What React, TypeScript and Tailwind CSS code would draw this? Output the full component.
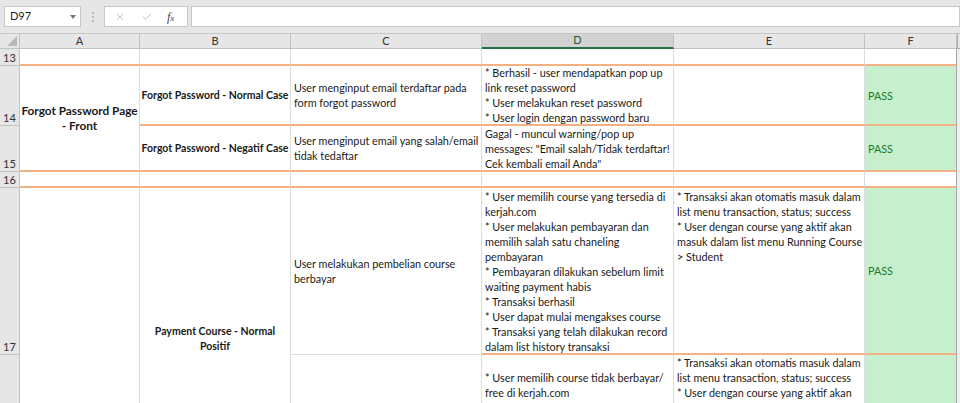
import { Check, X } from 'lucide-react'
import type { ReactNode } from 'react'

const orangeB = 'border-b-2 border-b-[#f4b183]'
const grayB = 'border-b border-b-[#dcdcdc]'
const bold = 'font-bold text-[10.5px]'
const body = 'text-[10.8px]'

type CellProps = {
    className?: string
    size?: string
    pad?: string
    edge?: string
    children?: ReactNode
}

function Cell({ className = '', size = body, pad = 'px-[3px]', edge = 'border-r-[#dcdcdc]', children }: CellProps) {
    return (
        <div className={`flex overflow-hidden border-r leading-[15px] text-[#1a1a1a] ${size} ${pad} ${edge} ${className}`}>
            {children}
        </div>
    )
}

function Lines({ lines, center = false }: { lines: string[]; center?: boolean }) {
    return (
        <div className={center ? 'w-full text-center' : ''}>
            {lines.map((l, i) => (
                <div key={i} className="whitespace-nowrap">
                    {l}
                </div>
            ))}
        </div>
    )
}

function RowHead({ n }: { n?: string }) {
    return (
        <div className="flex items-end justify-center border-r border-b border-[#c2c2c2] bg-[#e6e6e6] pb-[1px] text-[11px] leading-[13px] text-[#333]">
            {n}
        </div>
    )
}

function ColHead({ label, active = false }: { label: string; active?: boolean }) {
    return (
        <div
            className={
                active
                    ? 'flex items-center justify-center border-r border-b-2 border-r-[#c2c2c2] border-b-[#217346] bg-[#d2d2d2] text-[11px] text-[#1e5c3a]'
                    : 'flex items-center justify-center border-r border-b border-[#c2c2c2] bg-[#e6e6e6] text-[11px] text-[#333]'
            }
        >
            {label}
        </div>
    )
}

function Pass({ text = 'PASS', className = '' }: { text?: string; className?: string }) {
    return (
        <Cell edge="border-r-[#a6a6a6]" className={`items-center bg-[#c6efce] text-[#1f7a1f] ${className}`}>
            {text}
        </Cell>
    )
}

function Toolbar() {
    return (
        <div className="flex h-[34px] items-start border-b border-[#c8c8c8] bg-[#e6e6e6] pt-[6px] pl-[4px]">
            <div className="relative flex h-[21px] w-[77px] items-center border border-[#c6c6c6] bg-white pl-[5px] text-[11px] text-[#222]">
                D97
                <span className="absolute right-[4px] top-[8px] h-0 w-0 border-x-[3px] border-t-[4px] border-x-transparent border-t-[#777]" />
            </div>
            <div className="flex h-[21px] w-[23px] flex-col items-center justify-center gap-[2px]">
                <span className="h-[2px] w-[2px] rounded-full bg-[#a8a8a8]" />
                <span className="h-[2px] w-[2px] rounded-full bg-[#a8a8a8]" />
                <span className="h-[2px] w-[2px] rounded-full bg-[#a8a8a8]" />
            </div>
            <div className="flex h-[21px] w-[84px] items-center border border-[#c6c6c6] bg-white text-[#a6a6a6]">
                <X size={12} strokeWidth={1.3} className="ml-[9px]" />
                <Check size={12} strokeWidth={1.3} className="ml-[15px]" />
                <span className="ml-[14px] font-['Liberation_Serif',serif] text-[12px] italic text-[#444]">
                    f<span className="text-[9px]">x</span>
                </span>
            </div>
            <div className="ml-[3px] h-[21px] flex-1 border border-[#c6c6c6] bg-white" />
        </div>
    )
}

export default function App() {
    return (
        <div className="h-[403px] w-[960px] overflow-hidden bg-white font-['Lato',sans-serif]">
            <Toolbar />
            <div className="grid grid-cols-[20px_120px_151px_191px_192px_191px_92px_1fr] grid-rows-[15px_17px_60px_46px_16px_167px_60px]">
                {/* header */}
                <div className="relative border-r border-b border-[#c2c2c2] bg-[#e6e6e6]">
                    <svg className="absolute right-[2px] bottom-[2px]" width="10" height="10" viewBox="0 0 10 10">
                        <polygon points="10,0 10,10 0,10" fill="#b8b8b8" />
                    </svg>
                </div>
                <ColHead label="A" />
                <ColHead label="B" />
                <ColHead label="C" />
                <ColHead label="D" active />
                <ColHead label="E" />
                <ColHead label="F" />
                <div className="border-b border-l border-[#b0b0b0] bg-[#e6e6e6]" />

                {/* row 13 */}
                <RowHead n="13" />
                <Cell className={orangeB} />
                <Cell className={orangeB} />
                <Cell className={orangeB} />
                <Cell className={orangeB} />
                <Cell className={orangeB} />
                <Cell className={orangeB} edge="border-r-[#a6a6a6]" />
                <div className="row-span-6 bg-[#f0f0f0]" />

                {/* row 14 */}
                <RowHead n="14" />
                <Cell className={`${orangeB} row-span-2 items-center`} pad="px-0" size="text-[11.8px] font-bold">
                    <Lines center lines={['Forgot Password Page', '- Front']} />
                </Cell>
                <Cell className={`${orangeB} items-center`} pad="px-0" size={bold}>
                    <Lines center lines={['Forgot Password - Normal Case']} />
                </Cell>
                <Cell className={`${orangeB} items-center`}>
                    <Lines lines={['User menginput email terdaftar pada', 'form forgot password']} />
                </Cell>
                <Cell className={`${orangeB} items-center`}>
                    <Lines
                        lines={[
                            '* Berhasil - user mendapatkan pop up',
                            'link reset password',
                            '* User melakukan reset password',
                            '* User login dengan password baru',
                        ]}
                    />
                </Cell>
                <Cell className={orangeB} />
                <Pass className={orangeB} />

                {/* row 15 */}
                <RowHead n="15" />
                <Cell className={`${orangeB} items-center`} pad="px-0" size={bold}>
                    <Lines center lines={['Forgot Password - Negatif Case']} />
                </Cell>
                <Cell className={`${orangeB} items-center`}>
                    <Lines lines={['User menginput email yang salah/email', 'tidak tedaftar']} />
                </Cell>
                <Cell className={`${orangeB} items-center`}>
                    <Lines
                        lines={[
                            'Gagal - muncul warning/pop up',
                            'messages: "Email salah/Tidak terdaftar!',
                            'Cek kembali email Anda"',
                        ]}
                    />
                </Cell>
                <Cell className={orangeB} />
                <Pass className={orangeB} />

                {/* row 16 */}
                <RowHead n="16" />
                <Cell className={orangeB} />
                <Cell className={orangeB} />
                <Cell className={orangeB} />
                <Cell className={orangeB} />
                <Cell className={orangeB} />
                <Cell className={orangeB} edge="border-r-[#a6a6a6]" />

                {/* row 17 */}
                <RowHead n="17" />
                <Cell className="row-span-2" />
                <Cell className="row-span-2 items-start pt-[136px]" pad="px-0" size={bold}>
                    <Lines center lines={['Payment Course - Normal', 'Positif']} />
                </Cell>
                <Cell className={`${grayB} items-center`}>
                    <Lines lines={['User melakukan pembelian course', 'berbayar']} />
                </Cell>
                <Cell className={`${orangeB} items-start pt-[1px]`}>
                    <Lines
                        lines={[
                            '* User memilih course yang tersedia di',
                            'kerjah.com',
                            '* User melakukan pembayaran dan',
                            'memilih salah satu chaneling',
                            'pembayaran',
                            '* Pembayaran dilakukan sebelum limit',
                            'waiting payment habis',
                            '* Transaksi berhasil',
                            '* User dapat mulai mengakses course',
                            '* Transaksi yang telah dilakukan record',
                            'dalam list history transaksi',
                        ]}
                    />
                </Cell>
                <Cell className={`${orangeB} items-start pt-[1px]`}>
                    <Lines
                        lines={[
                            '* Transaksi akan otomatis masuk dalam',
                            'list menu transaction, status; success',
                            '* User dengan course yang aktif akan',
                            'masuk dalam list menu Running Course',
                            '> Student',
                        ]}
                    />
                </Cell>
                <Pass className={orangeB} />

                {/* row 18 */}
                <RowHead />
                <Cell />
                <Cell className="items-start pt-[15px]">
                    <Lines lines={['* User memilih course tidak berbayar/', 'free di kerjah.com']} />
                </Cell>
                <Cell className="items-start">
                    <Lines
                        lines={[
                            '* Transaksi akan otomatis masuk dalam',
                            'list menu transaction, status; success',
                            '* User dengan course yang aktif akan',
                        ]}
                    />
                </Cell>
                <Pass text="" />
                <div className="bg-[#f0f0f0]" />
            </div>
        </div>
    )
}
